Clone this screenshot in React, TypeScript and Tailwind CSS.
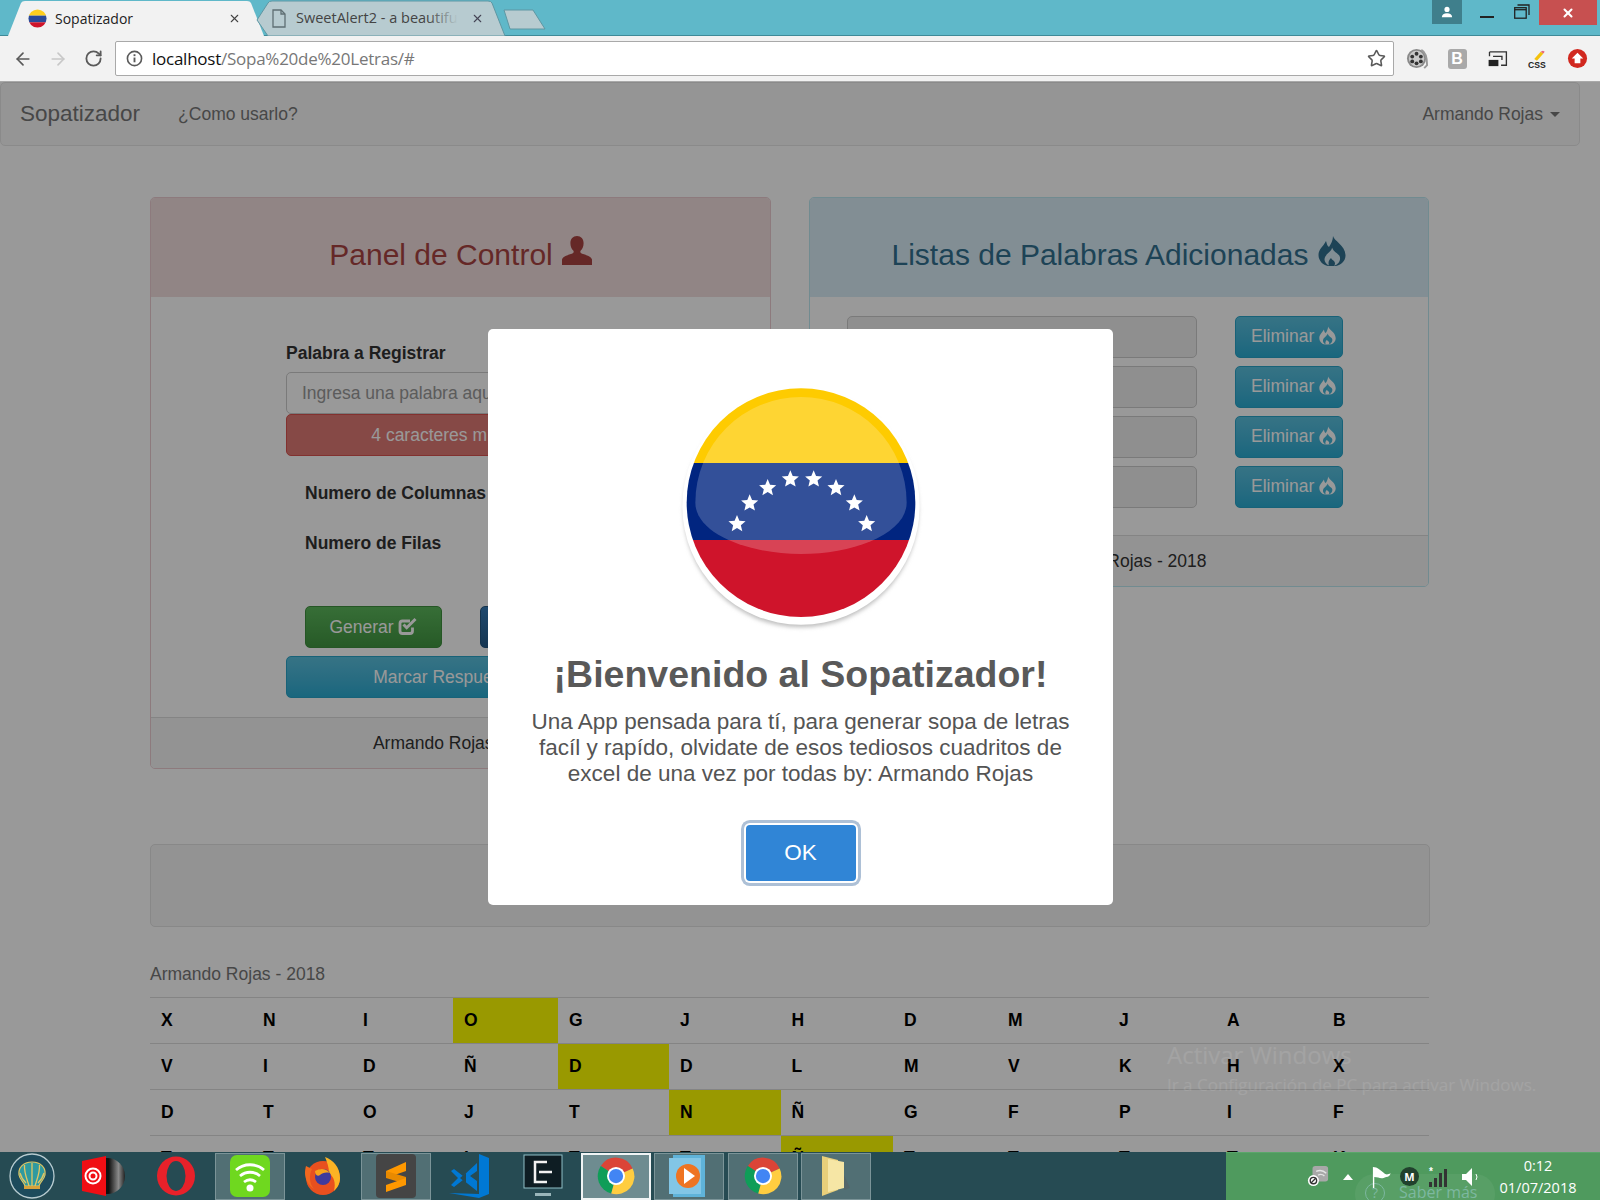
import React from "react";
import { ArrowLeft, ArrowRight, RotateCw, Star, X } from "lucide-react";

const SANS = "font-['Liberation_Sans',Arial,sans-serif]";

function UserGlyph({ className }: { className?: string }) {
  return (
    <svg viewBox="0 0 30 30" className={className} fill="currentColor">
      <path d="M15 0c4 0 6.600 3 6.600 7.300 0 3.200-1.200 5.800-2.800 7.300-.6.600-.7 1.700 0 2.400 2 1.400 10.200 2.500 11.200 6.500V29H0v-5.500C1 19.500 9.200 18.400 11.200 17c.7-.7.600-1.800 0-2.400-1.600-1.500-2.800-4.100-2.800-7.300C8.400 3 11 0 15 0z" />
    </svg>
  );
}

function FireGlyph({ className }: { className?: string }) {
  return (
    <svg viewBox="0 0 28 30" className={className} fill="currentColor" fillRule="evenodd">
      <path d="M15 0C16 5 27 9 27.500 19 27.800 25 23 29 18 30H10C5 29 .5 25 .5 19 .5 13 5 11 8 5 9 8 9 10 11 11 13 8 15 4 15 0Z M14 11.500C14 16 6.500 18 6.500 23.500 6.500 26 8.500 28.500 11 29.500 10 27 10.500 24.500 13 22 14 24.500 17 24.500 17 27.500 17 28.500 16.500 29 16 29.700 20 28.500 22.500 25 22 21.500 21.500 17.500 16 17 14 11.500Z" />
    </svg>
  );
}

function CheckGlyph({ className }: { className?: string }) {
  return (
    <svg viewBox="0 0 20 20" className={className} fill="none">
      <path d="M14.500 10.500V14a2.500 2.500 0 0 1-2.500 2.500H4.500A2.500 2.500 0 0 1 2 14V6.500A2.500 2.500 0 0 1 4.500 4H12" stroke="currentColor" strokeWidth="2.800" transform="translate(0 1)" />
      <path d="M5.500 8.500l3.200 3.200L17.500 3" stroke="currentColor" strokeWidth="3" />
    </svg>
  );
}

function Flag({ className }: { className?: string }) {
  const stars: [number, number][] = [
    [228, 462], [266, 400], [320, 354], [388, 328], [458, 328], [525, 354], [580, 400], [617, 462],
  ];
  const star = (cx: number, cy: number, r: number) => {
    const pts: string[] = [];
    for (let i = 0; i < 10; i++) {
      const a = -Math.PI / 2 + (i * Math.PI) / 5;
      const rr = i % 2 === 0 ? r : r * 0.45;
      pts.push(`${cx + rr * Math.cos(a)},${cy + rr * Math.sin(a)}`);
    }
    return pts.join(" ");
  };
  return (
    <svg viewBox="0 0 840 810" className={className}>
      <defs>
        <clipPath id="flagc"><circle cx="420" cy="398" r="343" /></clipPath>
        <filter id="soft"><feGaussianBlur stdDeviation="6" /></filter>
      </defs>
      <circle cx="420" cy="420" r="352" fill="#bdbdbd" filter="url(#soft)" />
      <circle cx="420" cy="408" r="356" fill="#ffffff" />
      <g clipPath="url(#flagc)">
        <rect x="0" y="0" width="840" height="279" fill="#fecb00" />
        <rect x="0" y="279" width="840" height="231" fill="#012580" />
        <rect x="0" y="510" width="840" height="300" fill="#cf142b" />
        <path d="M103 398A317 317 0 0 1 737 398C737 490 580 552 420 552 260 552 103 490 103 398Z" fill="#ffffff" fillOpacity="0.2" />
      </g>
      {stars.map(([x, y]) => (
        <polygon key={x} points={star(x, y, 27)} fill="#ffffff" />
      ))}
    </svg>
  );
}

function ChromeIcon({ className }: { className?: string }) {
  return (
    <svg viewBox="0 0 40 40" className={className}>
      <path d="M20 20L37.500 12A19 19 0 0 0 4 9.500Z" fill="#db4437" />
      <path d="M20 20L4 9.500A19 19 0 0 0 15 38.500Z" fill="#0f9d58" />
      <path d="M20 20L15 38.500A19 19 0 0 0 37.500 12Z" fill="#ffcd40" />
      <circle cx="20" cy="20" r="9.500" fill="#ffffff" />
      <circle cx="20" cy="20" r="7.500" fill="#4285f4" />
    </svg>
  );
}

function ShellIcon() {
  return (
    <svg viewBox="0 0 46 46" className="w-[46px] h-[46px]">
      <circle cx="23" cy="23" r="22" fill="#1d4b5c" stroke="#b7cbd0" strokeWidth="1.300" />
      <path d="M23 9C14 9 9 15 10 22 11 27 15 29 16 33H30C31 29 35 27 36 22 37 15 32 9 23 9Z" fill="#2f9aa0" stroke="#e2c663" strokeWidth="1.200" />
      <g fill="none" stroke="#e2c663" strokeWidth="1.300">
        <path d="M23 33V10" />
        <path d="M20 33C18 26 15 20 15.500 12" />
        <path d="M26 33C28 26 31 20 30.500 12" />
        <path d="M17 30C14 27 12 24 11 20" />
        <path d="M29 30C32 27 34 24 35 20" />
      </g>
      <path d="M15 33H31V36H15Z" fill="#d8a23a" />
    </svg>
  );
}

function VinylIcon() {
  return (
    <svg viewBox="0 0 46 40" className="w-[46px] h-[40px]">
      <defs>
        <linearGradient id="vinyl" x1="0" x2="1" y1="0" y2="0">
          <stop offset="0.550" stopColor="#111" />
          <stop offset="0.820" stopColor="#8a8a8a" />
          <stop offset="1" stopColor="#222" />
        </linearGradient>
      </defs>
      <ellipse cx="27" cy="20" rx="18" ry="18" fill="url(#vinyl)" />
      <path d="M2 5L26 0V40L2 35Z" fill="#f00e14" />
      <circle cx="13" cy="20" r="7.500" fill="none" stroke="#fff" strokeWidth="2" />
      <circle cx="13" cy="20" r="3.500" fill="none" stroke="#fff" strokeWidth="2" />
    </svg>
  );
}

function OperaIcon() {
  return (
    <svg viewBox="0 0 40 40" className="w-[40px] h-[40px]">
      <ellipse cx="20" cy="20" rx="19" ry="19.500" fill="#e8212a" />
      <ellipse cx="20" cy="20" rx="9.500" ry="15" fill="#264b53" />
    </svg>
  );
}

function WifiIcon() {
  return (
    <svg viewBox="0 0 40 42" className="w-[40px] h-[42px]">
      <rect x="0" y="0" width="40" height="42" rx="7" fill="#6fd81f" />
      <g fill="none" stroke="#ffffff" strokeWidth="2.800">
        <path d="M6 15c8-7 20-7 28 0" />
        <path d="M10 21c6-5 14-5 20 0" />
        <path d="M14 27c4-3 8-3 12 0" />
      </g>
      <circle cx="20" cy="33" r="3.500" fill="#ffffff" />
    </svg>
  );
}

function FirefoxIcon() {
  return (
    <svg viewBox="0 0 40 40" className="w-[40px] h-[40px]">
      <circle cx="20" cy="22" r="17" fill="#e8501f" />
      <path d="M22 1c8 3 15 10 15 21 0 6-3 10-6 13 2-8 0-14-5-18 0-6-2-11-4-16z" fill="#fcb324" />
      <path d="M3 10l6 3c-3 6-3 14 2 20-6-4-9-10-9-16 0-3 .5-5 1-7z" fill="#f2681f" />
      <circle cx="20" cy="21" r="8" fill="#3f3a9c" />
      <path d="M12 15c5-3 11-3 15 2-4-1-8 0-10 2-2 2-5 0-5-4z" fill="#f9a11b" />
    </svg>
  );
}

function SublimeIcon() {
  return (
    <svg viewBox="0 0 40 44" className="w-[40px] h-[44px]">
      <rect x="0" y="0" width="40" height="44" rx="4" fill="#454545" />
      <path d="M30 8L10 17v7l20-7z" fill="#ff9800" />
      <path d="M10 24l20 6v-7L10 17z" fill="#e98a00" />
      <path d="M30 24L10 31v7l20-7z" fill="#ff9800" />
    </svg>
  );
}

function VsCodeIcon() {
  return (
    <svg viewBox="0 0 40 44" className="w-[40px] h-[44px]">
      <path d="M30 0l10 4v36l-10 4-30-5 30 1V0z" fill="#0078d4" />
      <path d="M28 9L14 22 5 15l-3 2 7 7-7 7 3 2 9-7 14 11V27l-7-5 7-5z" fill="#0078d4" />
      <path d="M11 24l6-5v10z" fill="#264b53" />
    </svg>
  );
}

function EpicIcon() {
  return (
    <svg viewBox="0 0 40 44" className="w-[40px] h-[44px]">
      <rect x="1" y="1" width="38" height="33" fill="#0e1d23" stroke="#8fc0c7" strokeWidth="1" />
      <path d="M24 8H12v20h12" fill="none" stroke="#f2f2f2" strokeWidth="2.500" />
      <path d="M16 18h13" stroke="#f2f2f2" strokeWidth="2.500" />
      <rect x="12" y="39" width="16" height="3" fill="#9ab6ba" />
    </svg>
  );
}

function MediaIcon() {
  return (
    <svg viewBox="0 0 40 42" className="w-[40px] h-[42px]">
      <rect x="4" y="0" width="32" height="42" fill="#5fb3d9" />
      <rect x="0" y="3" width="32" height="36" fill="#82c6e6" />
      <circle cx="19" cy="21" r="12" fill="#ee7422" />
      <path d="M15 13l11 8-11 8z" fill="#fff" />
    </svg>
  );
}

function FolderIcon() {
  return (
    <svg viewBox="0 0 40 42" className="w-[40px] h-[42px]">
      <path d="M6 1l16 4v30l-16 6z" fill="#e8cf7a" />
      <path d="M12 4l16 3v26l-16 4z" fill="#f6e6a5" />
      <path d="M28 20l6 13-6 2z" fill="#55666a" />
    </svg>
  );
}

function TaskItem({ boxed, active, children }: { boxed?: boolean; active?: boolean; children: React.ReactNode }) {
  const cls = active
    ? "border-2 border-white/90 bg-[#6e8c90]"
    : boxed
      ? "border border-[#7b9498] bg-[#516f74]"
      : "border border-transparent";
  return (
    <div className={`w-[70px] h-[47px] flex items-center justify-center ${cls}`}>{children}</div>
  );
}

const rows: { l: string; hl?: number }[] = [
  { l: "XNIOGJHDMJAB", hl: 3 },
  { l: "VIDÑDDLMVKHX", hl: 4 },
  { l: "DTOJTNÑGFPIF", hl: 5 },
  { l: "TTTITTÑTTTTK", hl: 6 },
];

function Panel({ tone, title, icon, h, w, children }: { tone: "danger" | "info"; title: string; icon: React.ReactNode; h: string; w: string; children: React.ReactNode }) {
  const border = tone === "danger" ? "border-[#ebccd1]" : "border-[#bce8f1]";
  const head = tone === "danger" ? "bg-[#f2dede] text-[#a94442]" : "bg-[#d9edf7] text-[#31708f]";
  return (
    <div className={`${h} ${w} border ${border} rounded-[5px] bg-white flex flex-col overflow-hidden`}>
      <div className={`h-[99px] pt-[13px] shrink-0 flex items-center justify-center gap-[10px] text-[30px] ${head}`}>
        <span>{title}</span>
        {icon}
      </div>
      {children}
      <div className="h-[51px] shrink-0 border-t border-[#ddd] bg-[#f5f5f5] flex items-center justify-center text-[17.5px] text-[#333]">
        Armando Rojas - 2018
      </div>
    </div>
  );
}

const btn = "h-[42px] rounded-[5px] border text-white text-[17.5px] flex items-center justify-center";

export default function App() {
  return (
    <div className={`relative w-[1600px] h-[1200px] overflow-hidden flex flex-col bg-white ${SANS}`}>
      {/* Browser title bar */}
      <div className="h-[36px] shrink-0 bg-[#5fb8c9] border-b border-[#3f8a98] flex font-['Open_Sans',sans-serif] relative">
        <div className="relative w-[258px] h-[36px] ml-[7px] flex items-center text-[14px] text-[#222]">
          <svg viewBox="0 0 258 36" className="absolute inset-0 w-full h-full">
            <path d="M1 36L14 3Q15 1 18 1H240Q243 1 244 3L257 36Z" fill="#f2f2f2" />
          </svg>
          <svg viewBox="0 0 20 20" className="relative ml-[21px] w-[19px] h-[19px]">
            <clipPath id="fav"><circle cx="10" cy="10" r="9.500" /></clipPath>
            <g clipPath="url(#fav)">
              <rect width="20" height="7" fill="#ffcf1f" />
              <rect y="7" width="20" height="7" fill="#2a4a9a" />
              <rect y="14" width="20" height="6" fill="#cf142b" />
            </g>
          </svg>
          <span className="relative ml-[8px] w-[173px]">Sopatizador</span>
          <X className="relative w-[13px] h-[13px] text-[#444]" strokeWidth={2} />
        </div>
        <div className="relative w-[250px] h-[36px] -ml-[9px] flex items-center text-[14.5px] text-[#444]">
          <svg viewBox="0 0 250 36" className="absolute inset-0 w-full h-full">
            <path d="M1 20L12 3Q13 1 16 1H232Q235 1 236 3L249 36H12Z" fill="#b7cbd0" stroke="#5e97a3" />
          </svg>
          <svg viewBox="0 0 14 19" className="relative ml-[16px] w-[14px] h-[19px]" fill="none" stroke="#5f6f73" strokeWidth="1.300">
            <path d="M1 1h8l4 4v13H1z" />
            <path d="M9 1v4h4" />
          </svg>
          <div className="relative ml-[10px] w-[162px] overflow-hidden whitespace-nowrap">
            SweetAlert2 - a beautiful, responsive
            <div className="absolute right-0 top-0 bottom-0 w-[30px] bg-gradient-to-r from-transparent to-[#b7cbd0]" />
          </div>
          <X className="relative ml-[13px] w-[13px] h-[13px] text-[#445]" strokeWidth={2} />
        </div>
        <svg viewBox="0 0 44 22" className="-ml-[3px] mt-[9px] w-[44px] h-[22px]">
          <path d="M1 1H30L42 20H7Z" fill="#b7cbd0" stroke="#5e97a3" />
        </svg>
        <div className="flex-1" />
        <div className="w-[30px] h-[24px] bg-[#3f7f8c] flex items-center justify-center">
          <svg viewBox="0 0 14 14" className="w-[12px] h-[12px]" fill="#fff">
            <circle cx="7" cy="4" r="3" />
            <path d="M1 13c0-3 2.500-4.500 6-4.500s6 1.500 6 4.500z" />
          </svg>
        </div>
        <div className="w-[18px]" />
        <div className="w-[14px] h-[2px] mt-[16px] bg-[#222]" />
        <div className="w-[20px]" />
        <svg viewBox="0 0 16 15" className="w-[16px] h-[15px] mt-[4px]" fill="none" stroke="#222" strokeWidth="1.300">
          <rect x="0.700" y="3.700" width="11.500" height="10.500" />
          <path d="M0.700 5.700h11.500" />
          <path d="M3.500 1h11.500v10" />
        </svg>
        <div className="w-[9px]" />
        <div className="w-[58px] h-[25px] bg-[#c75050] flex items-center justify-center mr-[3px]">
          <X className="w-[14px] h-[14px] text-white" strokeWidth={3.500} />
        </div>
      </div>

      {/* Browser toolbar */}
      <div className="h-[46px] shrink-0 bg-[#f2f2f2] border-b border-[#a9a9a9] flex items-center font-['Open_Sans',sans-serif]">
        <ArrowLeft className="ml-[13px] w-[20px] h-[20px] text-[#5a5a5a]" strokeWidth={2} />
        <ArrowRight className="ml-[15px] w-[20px] h-[20px] text-[#c8c8c8]" strokeWidth={2} />
        <RotateCw className="ml-[16px] w-[19px] h-[19px] text-[#5a5a5a]" strokeWidth={2.300} />
        <div className="ml-[12px] w-[1279px] h-[35px] bg-white border border-[#a9a9a9] rounded-[2px] flex items-center pl-[10px] pr-[7px]">
          <svg viewBox="0 0 18 18" className="w-[17px] h-[17px] shrink-0" fill="none" stroke="#5a5a5a" strokeWidth="1.700">
            <circle cx="9" cy="9" r="7.500" />
            <path d="M9 8v5" strokeWidth="2" />
            <path d="M9 4.500v2" strokeWidth="2" />
          </svg>
          <span className="ml-[9px] text-[17px] tracking-[-0.25px] text-[#111]">localhost</span>
          <span className="text-[17px] tracking-[-0.25px] text-[#777]">/Sopa%20de%20Letras/#</span>
          <div className="flex-1" />
          <Star className="w-[19px] h-[19px] text-[#5a5a5a]" strokeWidth={2} />
        </div>
        <div className="ml-[3px] flex items-center">
          <div className="w-[40px] flex justify-center">
            <svg viewBox="0 0 24 24" className="w-[23px] h-[23px]">
              <circle cx="11" cy="12" r="10" fill="#8a8a8a" />
              <circle cx="11" cy="12" r="8" fill="#c9c9c9" />
              <g fill="#333">
                <circle cx="11" cy="7" r="2" /><circle cx="11" cy="17" r="2" />
                <circle cx="6.500" cy="10" r="2" /><circle cx="15.500" cy="10" r="2" />
                <circle cx="6.500" cy="15" r="2" /><circle cx="15.500" cy="15" r="2" />
              </g>
              <path d="M16 3c4 2 6 6 6 16l-3 3" fill="none" stroke="#999" strokeWidth="2" />
            </svg>
          </div>
          <div className="w-[40px] flex justify-center">
            <div className="w-[19px] h-[20px] rounded-[3px] bg-[#a9a9a9] text-white font-bold text-[16px] leading-[20px] text-center font-['Liberation_Sans',sans-serif]">B</div>
          </div>
          <div className="w-[40px] flex justify-center">
            <svg viewBox="0 0 22 18" className="w-[21px] h-[16px]" fill="none">
              <path d="M2 1h19v15h-6" stroke="#333" strokeWidth="1.500" />
              <path d="M2 1v5M6 6h10v4" stroke="#333" strokeWidth="1.500" />
              <rect x="1" y="10" width="11" height="7" fill="#222" />
            </svg>
          </div>
          <div className="w-[40px] flex justify-center">
            <svg viewBox="0 0 22 22" className="w-[20px] h-[20px]">
              <path d="M8 11L15 3l3 2-7 8z" fill="#f4c20d" />
              <path d="M15 3l3 2 1.500-2-2-1z" fill="#e8647a" />
              <text x="1" y="21" fontSize="9.500" fontWeight="700" fontFamily="Liberation Sans" fill="#222">CSS</text>
            </svg>
          </div>
          <div className="w-[40px] flex justify-center">
            <svg viewBox="0 0 22 22" className="w-[21px] h-[21px]">
              <circle cx="11" cy="11" r="10" fill="#d1281f" />
              <path d="M11 5l6 6h-3v5H8v-5H5z" fill="#fff" />
            </svg>
          </div>
        </div>
      </div>

      {/* Page */}
      <div className="relative h-[1070px] shrink-0 overflow-hidden text-[#333]">
        <div className="w-[1580px] h-[64px] border border-[#e7e7e7] rounded-[5px] bg-[#f8f8f8] flex items-center text-[#777] text-[17.5px]">
          <span className="ml-[19px] text-[22.500px] leading-none">Sopatizador</span>
          <span className="ml-[38px]">¿Como usarlo?</span>
          <div className="flex-1" />
          <span>Armando Rojas</span>
          <div className="ml-[7px] mr-[19px] w-0 h-0 border-x-[5px] border-x-transparent border-t-[5px] border-t-[#777]" />
        </div>

        <div className="pl-[150px] pr-[170px] pt-[51px]">
          <div className="flex items-start gap-[38px]">
            <Panel tone="danger" title="Panel de Control" icon={<UserGlyph className="w-[30px] h-[30px] mb-[6px] -ml-[1px]" />} h="h-[572px]" w="w-[621px]">
              <div className="flex-1 pl-[135px] pr-[136px] pt-[44px]">
                <div className="h-[25px] mb-[6px] font-bold text-[17.5px] leading-[25px] text-[#333]">Palabra a Registrar</div>
                <div className="h-[42px] border border-[#ccc] rounded-[5px] bg-white pl-[15px] text-[17.5px] leading-[40px] text-[#999] whitespace-nowrap overflow-hidden">
                  Ingresa una palabra aquí
                </div>
                <div className={`${btn} pr-[14px] border-[#d9534f] bg-[#df7a76]`}>4 caracteres mínimo!</div>
                <div className="ml-[19px] mt-[25px] h-[25px] font-bold text-[17.5px] leading-[25px]">Numero de Columnas</div>
                <div className="ml-[19px] mt-[25px] h-[25px] font-bold text-[17.5px] leading-[25px]">Numero de Filas</div>
                <div className="ml-[19px] mt-[50px] flex gap-[38px]">
                  <div className={`${btn} w-[137px] gap-[4px] border-[#3e8f3e] bg-gradient-to-b from-[#5cb85c] to-[#419641]`}>
                    Generar <CheckGlyph className="w-[20px] h-[20px] mb-[2px]" />
                  </div>
                  <div className={`${btn} w-[137px] border-[#245580] bg-gradient-to-b from-[#337ab7] to-[#265a88]`}>Limpiar</div>
                </div>
                <div className={`${btn} mt-[8px] pr-[22px] border-[#28a4c9] bg-gradient-to-b from-[#5bc0de] to-[#2aabd2]`}>Marcar Respuestas</div>
              </div>
            </Panel>

            <Panel tone="info" title="Listas de Palabras Adicionadas" icon={<FireGlyph className="w-[28px] h-[30px] mb-[6px]" />} h="h-[390px]" w="w-[620px]">
              <div className="flex-1 pl-[37px] pt-[19px] flex flex-col gap-[8px]">
                {[0, 1, 2, 3].map((i) => (
                  <div key={i} className="flex gap-[38px]">
                    <div className="w-[350px] h-[42px] border border-[#ccc] rounded-[5px] bg-[#eee]" />
                    <div className={`${btn} w-[108px] gap-[5px] !justify-start pl-[15px] pb-[2px] border-[#28a4c9] bg-gradient-to-b from-[#5bc0de] to-[#2aabd2]`}>
                      Eliminar <FireGlyph className="w-[17px] h-[19px] mb-[1px]" />
                    </div>
                  </div>
                ))}
              </div>
            </Panel>
          </div>

          <div className="mt-[75px] h-[83px] border border-[#e3e3e3] rounded-[5px] bg-[#f5f5f5]" />

          <div className="mt-[35px] h-[25px] text-[17.5px] leading-[25px] text-[#777]">Armando Rojas - 2018</div>
          <div className="mt-[10px] w-[1279px]">
            {rows.map((r, i) => (
              <div
                key={i}
                className="grid grid-cols-[102px_100px_101px_105px_111px_111.500px_112.500px_104px_111px_108px_106px_107px] h-[46px] border-t border-[#ddd] font-bold text-[17.5px] text-black"
              >
                {r.l.split("").map((c, j) => (
                  <div key={j} className={`pl-[11px] pt-[10px] leading-[25px] ${r.hl === j ? "bg-[#ffff00]" : ""}`}>
                    {c}
                  </div>
                ))}
              </div>
            ))}
          </div>
        </div>

        {/* SweetAlert overlay */}
        <div className="absolute inset-0 bg-black/40" />
        <div className="absolute left-[488px] top-[247px] w-[625px] h-[576px] bg-white rounded-[5px] flex flex-col items-center">
          <Flag className="w-[280px] h-[270px] mt-[41px] shrink-0" />
          <div className="mt-[11px] h-[46px] text-[37.5px] font-bold leading-[46px] text-[#595959]">¡Bienvenido al Sopatizador!</div>
          <div className="mt-[12px] w-[560px] text-center text-[22.500px] leading-[26px] text-[#545454]">
            Una App pensada para tí, para generar sopa de letras facíl y rapído, olvidate de esos tediosos cuadritos de excel de una vez por todas by: Armando Rojas
          </div>
          <div className="mt-[38px] w-[110px] h-[56px] rounded-[4px] bg-[#3085d6] text-white text-[22.500px] flex items-center justify-center shadow-[0_0_0_2px_#ffffff,0_0_0_5px_#adc0d6]">
            OK
          </div>
        </div>
      </div>

      {/* Taskbar */}
      <div className="h-[48px] shrink-0 bg-[#264b53] flex font-['Open_Sans',sans-serif]">
        <div className="w-[68px] pl-[9px] flex items-center">
          <ShellIcon />
        </div>
        <div className="flex gap-[3.300px] items-center">
          <TaskItem><VinylIcon /></TaskItem>
          <TaskItem><OperaIcon /></TaskItem>
          <TaskItem boxed><WifiIcon /></TaskItem>
          <TaskItem><FirefoxIcon /></TaskItem>
          <TaskItem boxed><SublimeIcon /></TaskItem>
          <TaskItem><VsCodeIcon /></TaskItem>
          <TaskItem><EpicIcon /></TaskItem>
          <TaskItem active><ChromeIcon className="w-[38px] h-[38px]" /></TaskItem>
          <TaskItem boxed><MediaIcon /></TaskItem>
          <TaskItem boxed><ChromeIcon className="w-[38px] h-[38px]" /></TaskItem>
          <TaskItem boxed><FolderIcon /></TaskItem>
        </div>
        <div className="flex-1" />
        <div className="relative w-[374px] bg-[#4f9a5e] border-t border-[#5aa66a] flex items-center">
          <div className="absolute left-[129px] top-[21px] w-[140px] h-[40px] rounded-full bg-white/5 flex items-start pl-[10px] pt-[9px] gap-[14px] text-[#7db8a0] text-[16px] leading-[18px]">
            <span className="w-[20px] h-[20px] rounded-full border border-[#7db8a0] text-center text-[14px]">?</span>
            <span>Saber más</span>
          </div>
          <svg viewBox="0 0 24 24" className="relative ml-[81px] mb-[2px] w-[22px] h-[22px]">
            <rect x="6" y="1" width="17" height="17" rx="3" fill="#a8a8a8" />
            <g fill="none" stroke="#e4e4e4" strokeWidth="1.500">
              <path d="M10 7a10 10 0 0 1 11 2" />
              <path d="M12 11a6 6 0 0 1 7 1" />
            </g>
            <circle cx="7" cy="17" r="6" fill="#fff" />
            <circle cx="7" cy="17" r="3.500" fill="none" stroke="#333" strokeWidth="1.500" />
            <path d="M4.500 19.500l5-5" stroke="#333" strokeWidth="1.500" />
          </svg>
          <svg viewBox="0 0 10 6" className="relative ml-[14px] w-[10px] h-[6px]" fill="#fff">
            <path d="M5 0l5 6H0z" />
          </svg>
          <svg viewBox="0 0 22 24" className="relative ml-[19px] w-[20px] h-[22px]" fill="#fff">
            <path d="M1 1v23h1.500V12c5 0 7 3 13 0 3 0 4-1 5-4-4 2-6 1-7 0C10 5 6 1 1 1z" />
          </svg>
          <div className="relative ml-[8px] w-[19px] h-[19px] rounded-full bg-[#21412d] text-white text-[11px] font-bold leading-[19px] text-center">M</div>
          <svg viewBox="0 0 20 20" className="relative ml-[9px] w-[20px] h-[20px]">
            <rect x="1" y="15" width="3" height="5" fill="#333" />
            <rect x="6" y="11" width="3" height="9" fill="#333" />
            <rect x="11" y="6" width="3" height="14" fill="#333" />
            <rect x="16" y="2" width="3" height="18" fill="#333" />
            <text x="1" y="8" fontSize="10" fontWeight="700" fill="#fff" fontFamily="Liberation Sans">*</text>
          </svg>
          <svg viewBox="0 0 20 20" className="relative ml-[13px] w-[20px] h-[20px]">
            <path d="M1 7h4l6-6v18l-6-6H1z" fill="#fff" />
            <path d="M15 7q2 3 0 6" stroke="#fff" fill="none" />
          </svg>
          <div className="relative ml-[17px] w-[80px] text-center text-white text-[14.500px] leading-[22px]">
            <div>0:12</div>
            <div className="whitespace-nowrap">01/07/2018</div>
          </div>
        </div>
      </div>

      {/* Windows activation watermark */}
      <div className="absolute left-[1167px] top-[1040px] text-white/10 font-['Open_Sans',sans-serif] whitespace-nowrap">
        <div className="text-[24px] leading-[30px]">Activar Windows</div>
        <div className="text-[17px] leading-[22px] mt-[4px]">Ir a Configuración de PC para activar Windows.</div>
      </div>
    </div>
  );
}
